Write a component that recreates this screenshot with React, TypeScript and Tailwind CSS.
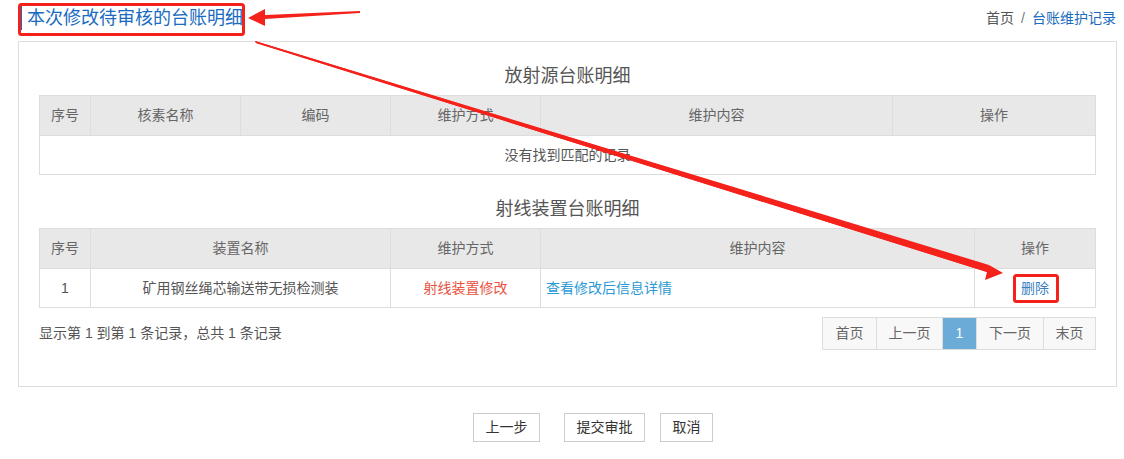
import React from 'react'

const FONT = "font-['Liberation_Sans','Noto_Sans_CJK_SC',sans-serif]"

function SectionTitle({ text }: { text: string }) {
  return (
    <div className="h-[53px] flex items-end justify-center pb-[6px]">
      <span className="text-[18px] leading-[26px] text-[#555]">{text}</span>
    </div>
  )
}

function Pager() {
  const items = [
    { label: '首页', w: 'w-[55px]' },
    { label: '上一页', w: 'w-[67px]' },
    { label: '1', w: 'w-[35px]', active: true },
    { label: '下一页', w: 'w-[68px]' },
    { label: '末页', w: 'w-[53px]' },
  ]
  return (
    <div className="flex">
      {items.map((it, i) => (
        <div
          key={i}
          className={`${it.w} h-[33px] flex items-center justify-center text-[14px] border border-[#ddd] ${i > 0 ? '-ml-px' : ''} ${
            it.active ? 'bg-[#6aabd8] border-[#6aabd8] text-white relative' : 'bg-[#f8f8f8] text-[#666]'
          }`}
        >
          {it.label}
        </div>
      ))}
    </div>
  )
}

function Annotations() {
  return (
    <svg className="absolute left-0 top-0 pointer-events-none" width="1124" height="459" viewBox="0 0 1124 459">
      {/* box around title */}
      <rect x="19.5" y="4.5" width="224" height="30" rx="2" fill="none" stroke="#f5211b" strokeWidth="3" />
      {/* short arrow to title */}
      <polygon points="360,11 360,13 265,19 265,26 248,18 265,9 265,15" fill="#f5211b" />
      {/* long arrow to delete */}
      <polygon points="255,41 256,43 987,272 985,280 1003,273 989,265 989,266" fill="#f5211b" />
      <polygon points="255,41 989,265 987,272 256,43" fill="#f5211b" />
      {/* box around delete */}
      <rect x="1014.5" y="275.5" width="43" height="26" rx="2" fill="none" stroke="#f5211b" strokeWidth="3" />
    </svg>
  )
}

export default function App() {
  const th = 'h-[40px] border border-[#ddd] bg-[#e8e8e8] font-normal text-[14px] text-[#666] text-center'
  const td = 'h-[39px] border border-[#ddd] text-[14px] text-[#555] text-center'
  return (
    <div className={`relative w-full h-[459px] bg-white ${FONT}`}>
      <div className="h-[36px] flex items-center justify-between">
        <div className="ml-[21px] border-l border-[#1a6bbf] pl-[5px] text-[18px] leading-[24px] text-[#1a6bbf]">
          本次修改待审核的台账明细
        </div>
        <div className="mr-[8px] text-[14px] text-[#555] flex items-center">
          <span>首页</span>
          <span className="mx-[7px] text-[#777]">/</span>
          <span className="text-[#1a6bbf]">台账维护记录</span>
        </div>
      </div>

      <div className="mt-[5px] ml-[18px] mr-[7px] border border-[#ddd] px-[20px] pb-[36px]">
        <SectionTitle text="放射源台账明细" />
        <table className="w-full table-fixed border-collapse">
          <colgroup>
            <col className="w-[51px]" />
            <col className="w-[150px]" />
            <col className="w-[150px]" />
            <col className="w-[150px]" />
            <col className="w-[352px]" />
            <col />
          </colgroup>
          <thead>
            <tr>
              <th className={th}>序号</th>
              <th className={th}>核素名称</th>
              <th className={th}>编码</th>
              <th className={th}>维护方式</th>
              <th className={th}>维护内容</th>
              <th className={th}>操作</th>
            </tr>
          </thead>
          <tbody>
            <tr>
              <td className={td} colSpan={6}>没有找到匹配的记录</td>
            </tr>
          </tbody>
        </table>

        <SectionTitle text="射线装置台账明细" />
        <table className="w-full table-fixed border-collapse">
          <colgroup>
            <col className="w-[51px]" />
            <col className="w-[300px]" />
            <col className="w-[150px]" />
            <col className="w-[434px]" />
            <col />
          </colgroup>
          <thead>
            <tr>
              <th className={th}>序号</th>
              <th className={th}>装置名称</th>
              <th className={th}>维护方式</th>
              <th className={th}>维护内容</th>
              <th className={th}>操作</th>
            </tr>
          </thead>
          <tbody>
            <tr>
              <td className={td}>1</td>
              <td className={td}>矿用钢丝绳芯输送带无损检测装</td>
              <td className={`${td} !text-[#e8533f]`}>射线装置修改</td>
              <td className={`${td} !text-left pl-[5px] !text-[#2b9ad4]`}>查看修改后信息详情</td>
              <td className={`${td} !text-[#3a7fc4]`}>删除</td>
            </tr>
          </tbody>
        </table>

        <div className="mt-[9px] flex items-center justify-between">
          <span className="text-[14px] text-[#555]">显示第 1 到第 1 条记录，总共 1 条记录</span>
          <Pager />
        </div>
      </div>

      <div className="mt-[26px] flex justify-center pl-[62px]">
        <button className="w-[67px] h-[29px] border border-[#ccc] bg-white text-[14px] text-[#333]">上一步</button>
        <button className="ml-[24px] w-[81px] h-[29px] border border-[#ccc] bg-white text-[14px] text-[#333]">提交审批</button>
        <button className="ml-[15px] w-[53px] h-[29px] border border-[#ccc] bg-white text-[14px] text-[#333]">取消</button>
      </div>

      <Annotations />
    </div>
  )
}
